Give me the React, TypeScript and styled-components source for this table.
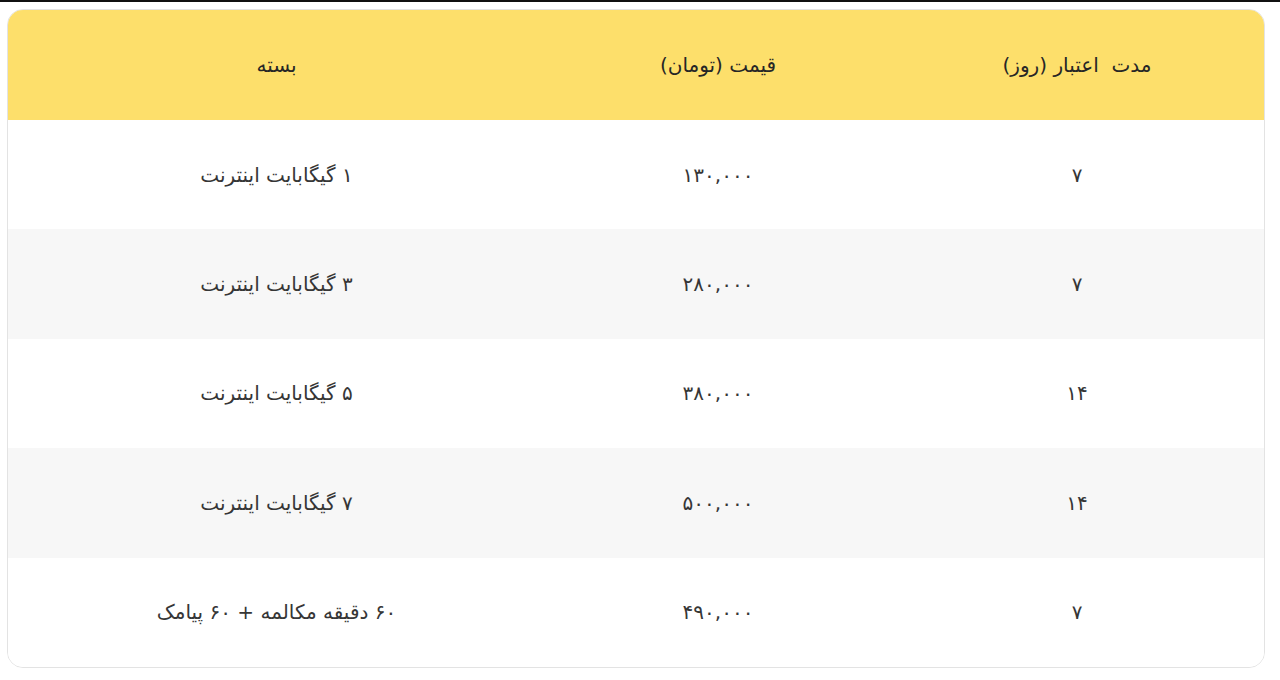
import styled, { createGlobalStyle } from "styled-components";

const GlobalStyle = createGlobalStyle`
  html, body {
    margin: 0;
    padding: 0;
    background: #ffffff;
  }
  body {
    font-family: "DejaVu Sans", "Noto Sans", sans-serif;
    color: #333333;
  }
`;

const TopEdge = styled.div`
  height: 2px;
  background: #111111;
`;

const Page = styled.div`
  padding: 7px 15px 12px 7px;
  direction: rtl;
`;

const TableFrame = styled.div`
  border: 1px solid #e3e3e3;
  border-radius: 16px;
  overflow: hidden;
  background: #ffffff;
`;

const Table = styled.table`
  width: 100%;
  border-collapse: collapse;
  table-layout: fixed;
`;

const HeadRow = styled.tr`
  background: #fddf6b;
  height: 110px;
`;

const HeadCell = styled.th<{ $width: number }>`
  width: ${(p) => p.$width}px;
  font-size: 20px;
  font-weight: 400;
  color: #262626;
  text-align: center;
  padding: 0;
`;

const BodyRow = styled.tr<{ $shaded: boolean }>`
  background: ${(p) => (p.$shaded ? "#f7f7f7" : "#ffffff")};
  height: 109.4px;
`;

const Cell = styled.td`
  font-size: 20px;
  color: #363636;
  text-align: center;
  padding: 0;
`;

const rows = [
  { days: "۷", price: "۱۳۰,۰۰۰", pack: "۱ گیگابایت اینترنت" },
  { days: "۷", price: "۲۸۰,۰۰۰", pack: "۳ گیگابایت اینترنت" },
  { days: "۱۴", price: "۳۸۰,۰۰۰", pack: "۵ گیگابایت اینترنت" },
  { days: "۱۴", price: "۵۰۰,۰۰۰", pack: "۷ گیگابایت اینترنت" },
  { days: "۷", price: "۴۹۰,۰۰۰", pack: "۶۰ دقیقه مکالمه + ۶۰ پیامک" },
];

export default function App() {
  return (
    <>
      <GlobalStyle />
      <TopEdge />
      <Page>
        <TableFrame>
          <Table>
            <thead>
              <HeadRow>
                <HeadCell $width={374}>مدت&nbsp; اعتبار (روز)</HeadCell>
                <HeadCell $width={344}>قیمت (تومان)</HeadCell>
                <HeadCell $width={539}>بسته</HeadCell>
              </HeadRow>
            </thead>
            <tbody>
              {rows.map((r, i) => (
                <BodyRow key={i} $shaded={i % 2 === 1}>
                  <Cell>{r.days}</Cell>
                  <Cell>{r.price}</Cell>
                  <Cell>{r.pack}</Cell>
                </BodyRow>
              ))}
            </tbody>
          </Table>
        </TableFrame>
      </Page>
    </>
  );
}
